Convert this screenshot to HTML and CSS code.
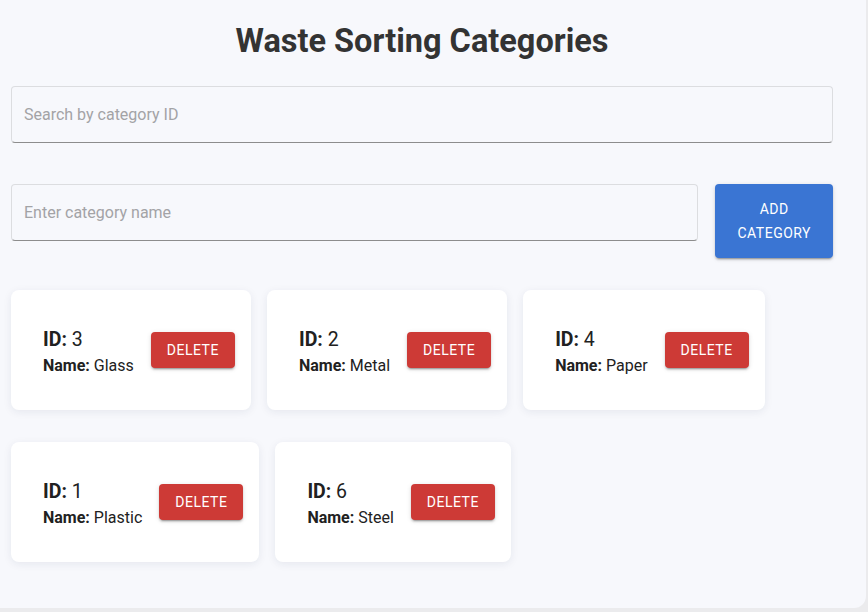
FILE: index.html
```html
<!DOCTYPE html>
<html lang="en">
<head>
<meta charset="utf-8">
<title>Waste Sorting Categories</title>
<link rel="stylesheet" href="styles.css">
</head>
<body>
<div class="page">
  <div class="content">
    <h1 class="title">Waste Sorting Categories</h1>
    <input class="field search" type="text" placeholder="Search by category ID">
    <div class="add-row">
      <input class="field add-input" type="text" placeholder="Enter category name">
      <button class="btn btn-blue add-btn">Add Category</button>
    </div>
    <div class="cards">
      <div class="card">
        <div class="info">
          <div class="id"><b>ID:</b> 3</div>
          <div class="name"><b>Name:</b> Glass</div>
        </div>
        <button class="btn btn-red">Delete</button>
      </div>
      <div class="card">
        <div class="info">
          <div class="id"><b>ID:</b> 2</div>
          <div class="name"><b>Name:</b> Metal</div>
        </div>
        <button class="btn btn-red">Delete</button>
      </div>
      <div class="card">
        <div class="info">
          <div class="id"><b>ID:</b> 4</div>
          <div class="name"><b>Name:</b> Paper</div>
        </div>
        <button class="btn btn-red">Delete</button>
      </div>
      <div class="card">
        <div class="info">
          <div class="id"><b>ID:</b> 1</div>
          <div class="name"><b>Name:</b> Plastic</div>
        </div>
        <button class="btn btn-red">Delete</button>
      </div>
      <div class="card">
        <div class="info">
          <div class="id"><b>ID:</b> 6</div>
          <div class="name"><b>Name:</b> Steel</div>
        </div>
        <button class="btn btn-red">Delete</button>
      </div>
    </div>
  </div>
</div>
</body>
</html>
```

FILE: styles.css
```css
* { box-sizing: border-box; }

html, body {
  margin: 0;
  padding: 0;
  background: #ebebed;
  font-family: Roboto, "Liberation Sans", Arial, sans-serif;
}

.page {
  width: 866px;
  height: 608px;
  background: #f7f8fc;
  border-radius: 0 0 12px 0;
  overflow: hidden;
}

.content {
  width: 822px;
  margin-left: 11px;
  padding-top: 21px;
}

.title {
  margin: 0 0 25px;
  font-size: 32.5px;
  line-height: 40px;
  font-weight: 700;
  color: #333333;
  text-align: center;
}

.field {
  display: block;
  height: 57px;
  padding: 0 12px;
  font-family: Roboto, "Liberation Sans", Arial, sans-serif;
  font-size: 16px;
  color: #222;
  background: transparent;
  border: 1px solid #dcdde0;
  border-bottom: 1px solid #8d8d8d;
  border-radius: 4px;
  outline: none;
}

.field::placeholder {
  color: #a3a3a6;
}

.search {
  width: 100%;
  margin-bottom: 41px;
}

.add-row {
  display: flex;
  align-items: flex-start;
  gap: 17px;
}

.add-input {
  flex: 1;
  min-width: 0;
}

.btn {
  border: none;
  border-radius: 4px;
  font-family: Roboto, "Liberation Sans", Arial, sans-serif;
  font-size: 14px;
  font-weight: 400;
  line-height: 24.5px;
  letter-spacing: 0.5px;
  text-transform: uppercase;
  color: #ffffff;
  cursor: pointer;
  box-shadow: 0 3px 1px -2px rgba(0,0,0,0.2), 0 2px 2px 0 rgba(0,0,0,0.14), 0 1px 5px 0 rgba(0,0,0,0.12);
}

.btn-blue {
  background: #3a75d3;
}

.add-btn {
  width: min-content;
  padding: 12.5px 22px;
}

.btn-red {
  background: #cd3a36;
  padding: 6px 16px;
  flex-shrink: 0;
}

.cards {
  display: flex;
  flex-wrap: wrap;
  column-gap: 16px;
  row-gap: 32px;
  margin-top: 32px;
}

.card {
  display: flex;
  align-items: center;
  gap: 17px;
  height: 120px;
  padding: 0 16px 0 32px;
  background: #ffffff;
  border-radius: 8px;
  box-shadow: 0 2px 8px rgba(30, 40, 80, 0.08);
}

.info {
  color: #212121;
  padding-top: 4px;
}

.info b {
  font-weight: 700;
}

.id {
  font-size: 19.5px;
  line-height: 28px;
}

.name {
  font-size: 16px;
  line-height: 24px;
}
```
